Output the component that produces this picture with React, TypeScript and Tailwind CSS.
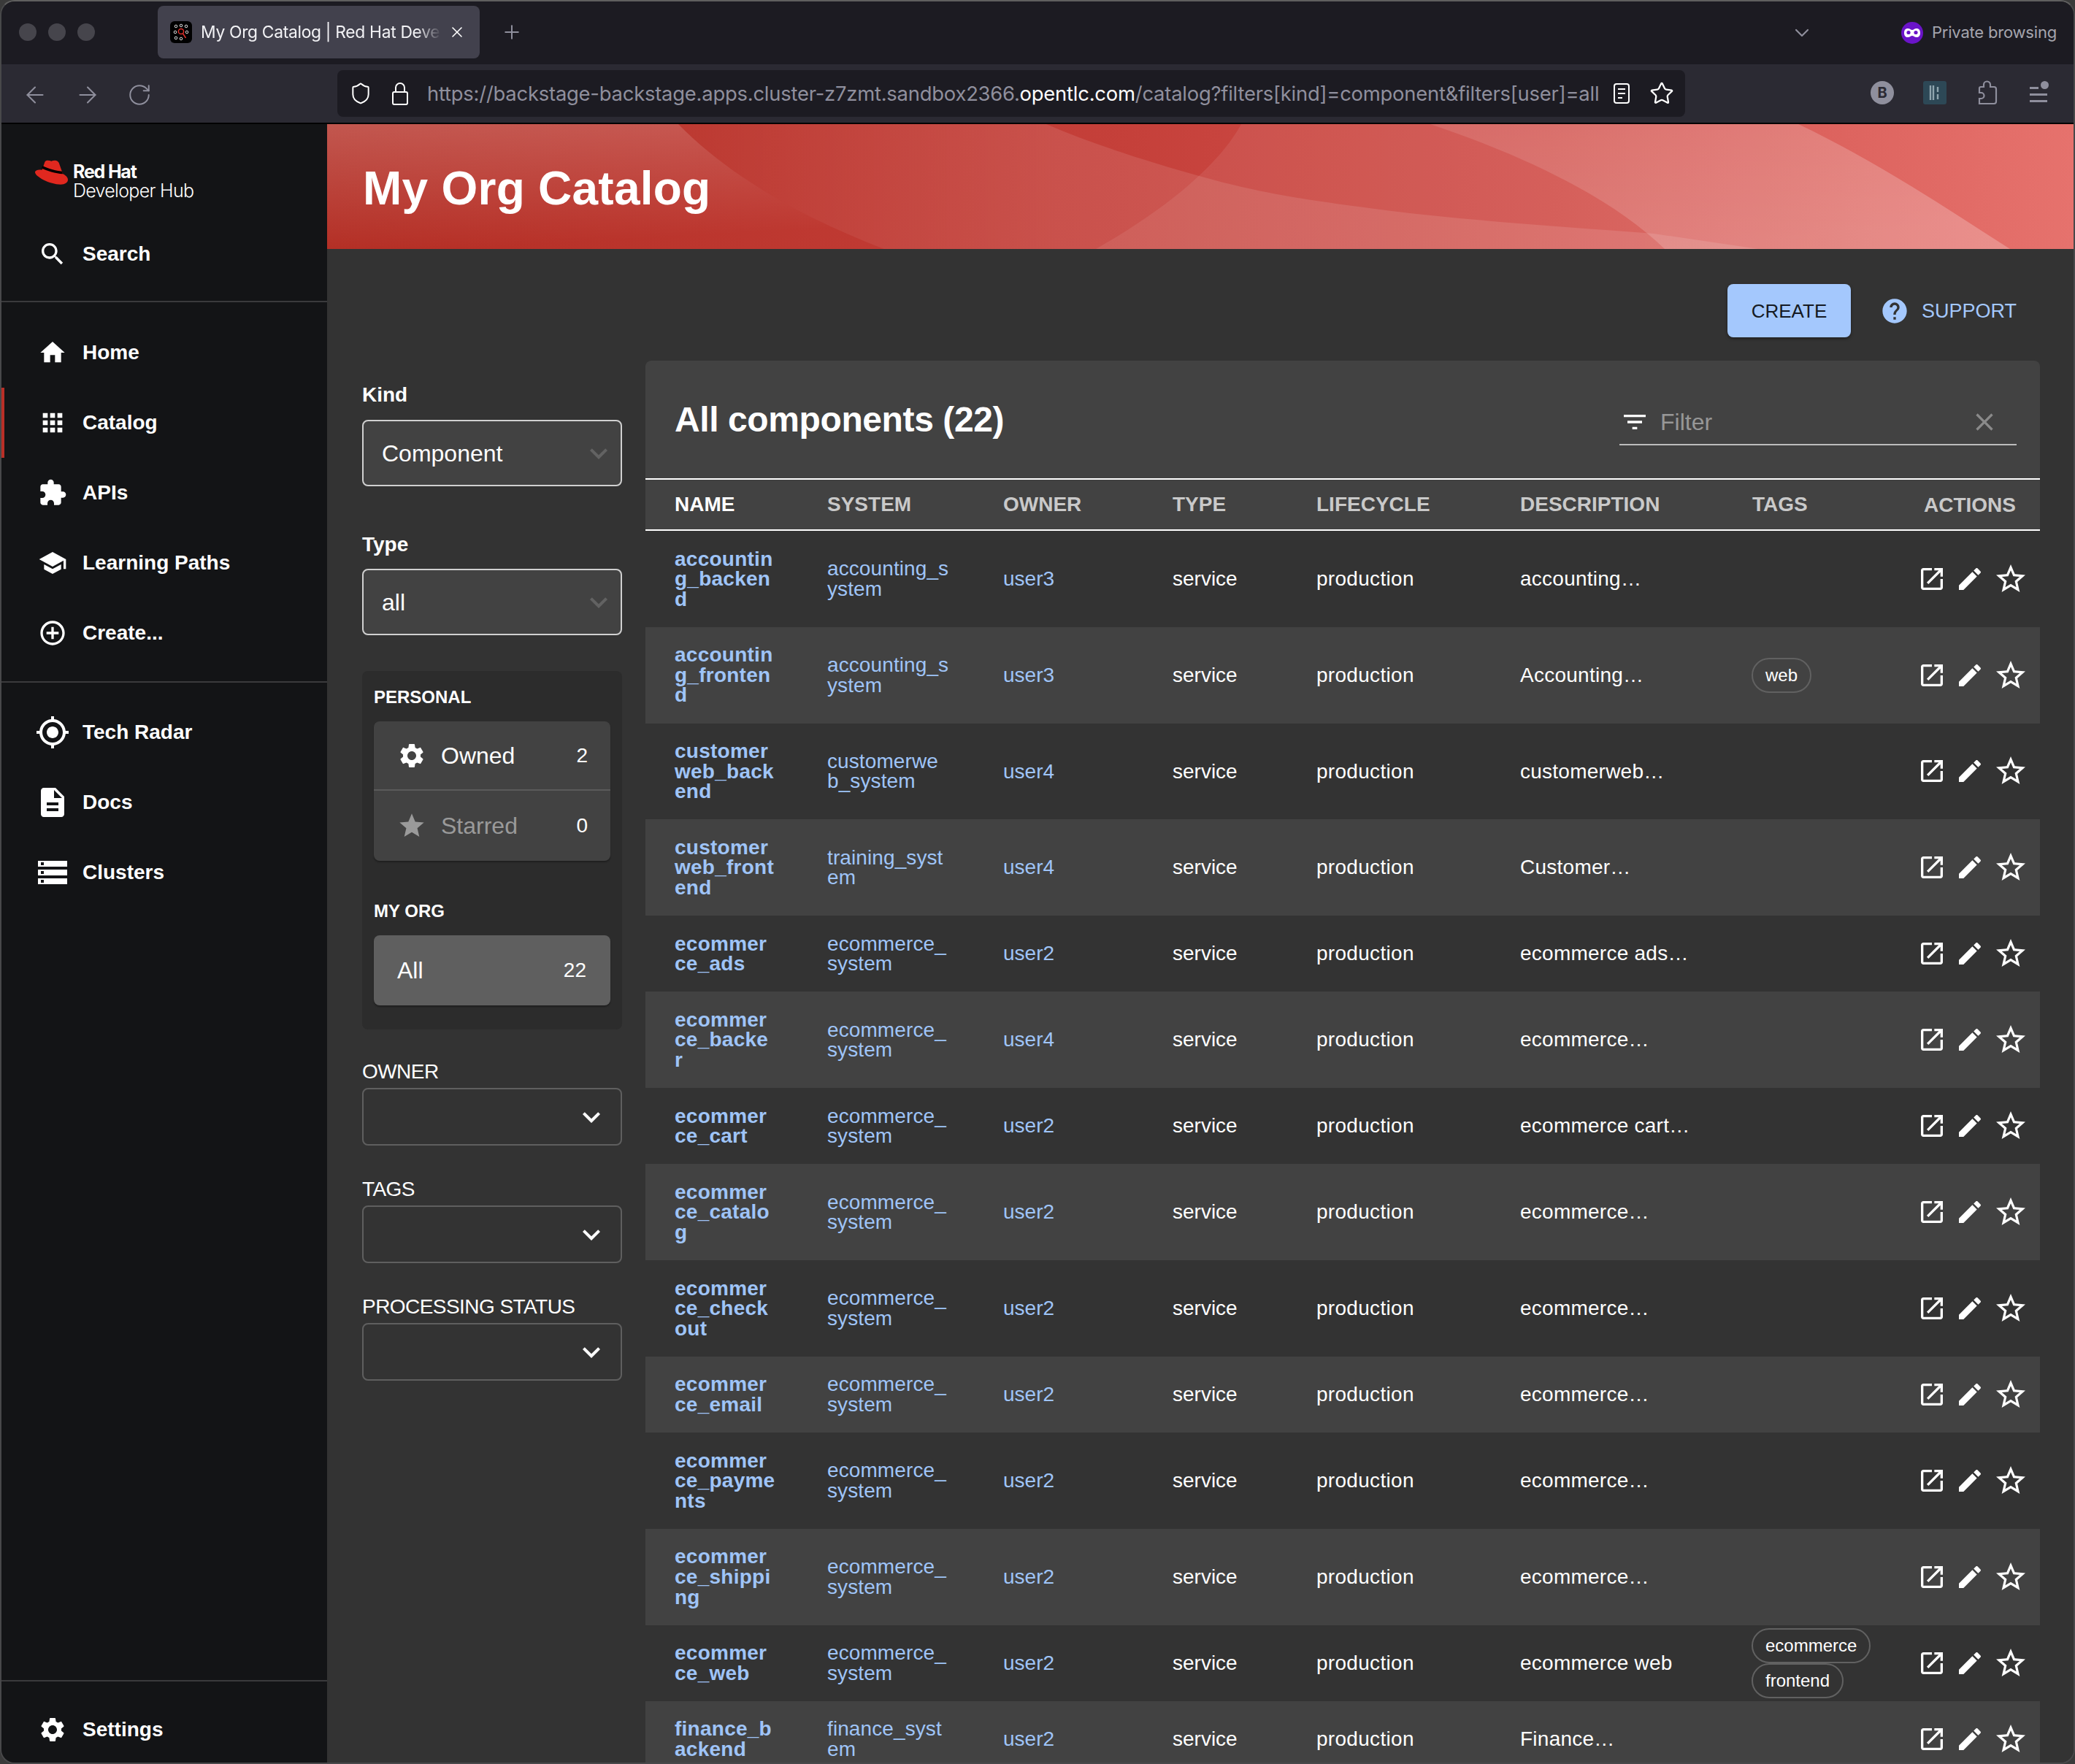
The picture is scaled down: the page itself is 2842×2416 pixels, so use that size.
import { ArrowLeft, ArrowRight, ChevronDown, Plus, RotateCw, Shield, Star, X } from 'lucide-react'

const paths = {
  home: 'M10 20v-6h4v6h5v-8h3L12 3 2 12h3v8z',
  apps: 'M4 8h4V4H4v4zm6 12h4v-4h-4v4zm-6 0h4v-4H4v4zm0-6h4v-4H4v4zm6 0h4v-4h-4v4zm6-10v4h4V4h-4zm-6 4h4V4h-4v4zm6 6h4v-4h-4v4zm0 6h4v-4h-4v4z',
  extension:
    'M20.5 11H19V7c0-1.1-.9-2-2-2h-4V3.5C13 2.12 11.88 1 10.5 1S8 2.12 8 3.5V5H4c-1.1 0-1.99.9-1.99 2v3.8H3.5c1.49 0 2.7 1.21 2.7 2.7s-1.21 2.7-2.7 2.7H2V20c0 1.1.9 2 2 2h3.8v-1.5c0-1.49 1.21-2.7 2.7-2.7 1.49 0 2.7 1.21 2.7 2.7V22H17c1.1 0 2-.9 2-2v-4h1.5c1.38 0 2.5-1.12 2.5-2.5S21.88 11 20.5 11z',
  school: 'M5 13.18v4L12 21l7-3.82v-4L12 17l-7-3.82zM12 3L1 9l11 6 9-4.91V17h2V9L12 3z',
  addCircle:
    'M13 7h-2v4H7v2h4v4h2v-4h4v-2h-4V7zm-1-5C6.48 2 2 6.48 2 12s4.48 10 10 10 10-4.48 10-10S17.52 2 12 2zm0 18c-4.41 0-8-3.59-8-8s3.59-8 8-8 8 3.59 8 8-3.59 8-8 8z',
  gps: 'M12 8c-2.21 0-4 1.79-4 4s1.79 4 4 4 4-1.79 4-4-1.79-4-4-4zm8.94 3c-.46-4.17-3.77-7.48-7.94-7.94V1h-2v2.06C6.83 3.52 3.52 6.83 3.06 11H1v2h2.06c.46 4.17 3.77 7.48 7.94 7.94V23h2v-2.06c4.17-.46 7.48-3.77 7.94-7.94H23v-2h-2.06zM12 19c-3.87 0-7-3.13-7-7s3.13-7 7-7 7 3.13 7 7-3.13 7-7 7z',
  description:
    'M14 2H6c-1.1 0-1.99.9-1.99 2L4 20c0 1.1.89 2 1.99 2H18c1.1 0 2-.9 2-2V8l-6-6zm2 16H8v-2h8v2zm0-4H8v-2h8v2zm-3-5V3.5L18.5 9H13z',
  storage: 'M2 20h20v-4H2v4zm2-3h2v2H4v-2zM2 4v4h20V4H2zm4 3H4V5h2v2zm-4 7h20v-4H2v4zm2-3h2v2H4v-2z',
  settings:
    'M19.14 12.94c.04-.3.06-.61.06-.94 0-.32-.02-.64-.07-.94l2.03-1.58c.18-.14.23-.41.12-.61l-1.92-3.32c-.12-.22-.37-.29-.59-.22l-2.39.96c-.5-.38-1.03-.7-1.62-.94l-.36-2.54c-.04-.24-.24-.41-.48-.41h-3.84c-.24 0-.43.17-.47.41l-.36 2.54c-.59.24-1.13.57-1.62.94l-2.39-.96c-.22-.08-.47 0-.59.22L2.74 8.87c-.12.21-.08.47.12.61l2.03 1.58c-.05.3-.09.63-.09.94s.02.64.07.94l-2.03 1.58c-.18.14-.23.41-.12.61l1.92 3.32c.12.22.37.29.59.22l2.39-.96c.5.38 1.03.7 1.62.94l.36 2.54c.05.24.24.41.48.41h3.84c.24 0 .44-.17.47-.41l.36-2.54c.59-.24 1.13-.56 1.62-.94l2.39.96c.22.08.47 0 .59-.22l1.92-3.32c.12-.22.07-.47-.12-.61l-2.01-1.58zM12 15.6c-1.98 0-3.6-1.62-3.6-3.6s1.62-3.6 3.6-3.6 3.6 1.62 3.6 3.6-1.62 3.6-3.6 3.6z',
  search:
    'M15.5 14h-.79l-.28-.27C15.41 12.59 16 11.11 16 9.5 16 5.91 13.09 3 9.5 3S3 5.91 3 9.5 5.91 16 9.5 16c1.61 0 3.09-.59 4.23-1.57l.27.28v.79l5 4.99L20.49 19l-4.99-5zm-6 0C7.01 14 5 11.99 5 9.5S7.01 5 9.5 5 14 7.01 14 9.5 11.99 14 9.5 14z',
  openInNew:
    'M19 19H5V5h7V3H5c-1.11 0-2 .9-2 2v14c0 1.1.89 2 2 2h14c1.1 0 2-.9 2-2v-7h-2v7zM14 3v2h3.59l-9.83 9.83 1.41 1.41L19 6.41V10h2V3h-7z',
  edit: 'M3 17.25V21h3.75L17.81 9.94l-3.75-3.75L3 17.25zM20.71 7.04c.39-.39.39-1.02 0-1.41l-2.34-2.34c-.39-.39-1.02-.39-1.41 0l-1.83 1.83 3.75 3.75 1.83-1.83z',
  starBorder:
    'M22 9.24l-7.19-.62L12 2 9.19 8.63 2 9.24l5.46 4.73L5.82 21 12 17.27 18.18 21l-1.63-7.03L22 9.24zM12 15.4l-3.76 2.27 1-4.28-3.32-2.88 4.38-.38L12 6.1l1.71 4.04 4.38.38-3.32 2.88 1 4.28L12 15.4z',
  star: 'M12 17.27L18.18 21l-1.64-7.03L22 9.24l-7.19-.61L12 2 9.19 8.63 2 9.24l5.46 4.73L5.82 21z',
  filter: 'M10 18h4v-2h-4v2zM3 6v2h18V6H3zm3 7h12v-2H6v2z',
  clear: 'M19 6.41L17.59 5 12 10.59 6.41 5 5 6.41 10.59 12 5 17.59 6.41 19 12 13.41 17.59 19 19 17.59 13.41 12z',
  help: 'M12 2C6.48 2 2 6.48 2 12s4.48 10 10 10 10-4.48 10-10S17.52 2 12 2zm1 17h-2v-2h2v2zm2.07-7.75l-.9.92C13.45 12.9 13 13.5 13 15h-2v-.5c0-1.1.45-2.1 1.17-2.83l1.24-1.26c.37-.36.59-.86.59-1.41 0-1.1-.9-2-2-2s-2 .9-2 2H8c0-2.21 1.79-4 4-4s4 1.79 4 4c0 .88-.36 1.68-.93 2.25z',
  expand: 'M16.59 8.59L12 13.17 7.41 8.59 6 10l6 6 6-6z',
}

function Mui({ d, size = 40, className = 'text-white' }: { d: string; size?: number; className?: string }) {
  return (
    <svg viewBox="0 0 24 24" width={size} height={size} fill="currentColor" className={`shrink-0 ${className}`}>
      <path d={d} />
    </svg>
  )
}

function TabFavicon() {
  return (
    <svg viewBox="0 0 30 30" width={30} height={30} className="shrink-0">
      <rect width="30" height="30" rx="6" fill="#000" />
      {[
        [8, 7],
        [15, 6],
        [22, 7],
        [7, 15],
        [23, 15],
        [8, 23],
        [15, 24],
      ].map(([cx, cy]) => (
        <circle key={`${cx}-${cy}`} cx={cx} cy={cy} r="1.8" fill="none" stroke="#ddd" strokeWidth="1" />
      ))}
      <circle cx="15" cy="14" r="3.6" fill="none" stroke="#e0302a" strokeWidth="1.5" />
      <path d="M17.5 17l4 6" stroke="#e0302a" strokeWidth="1.5" />
    </svg>
  )
}

function BrowserChrome() {
  return (
    <div className="shrink-0 font-['Inter',sans-serif]">
      <div className="flex h-[86px] items-start bg-[#1c1b22]">
        <div className="ml-[24px] mt-[30px] flex w-[190px] gap-[16px]">
          <span className="size-[24px] rounded-full bg-[#46454c]" />
          <span className="size-[24px] rounded-full bg-[#46454c]" />
          <span className="size-[24px] rounded-full bg-[#46454c]" />
        </div>
        <div className="mt-[6px] flex h-[72px] w-[441px] items-center rounded-[8px] bg-[#42414d] pl-[17px]">
          <TabFavicon />
          <div className="ml-[12px] w-[329px] whitespace-nowrap text-[22.8px] tracking-[-0.3px] text-[#f2f2f5] [mask-image:linear-gradient(90deg,#000_90%,transparent)]">
            My Org Catalog | Red Hat Develo
          </div>
          <X size={24} strokeWidth={1.6} className="ml-[10px] text-white" />
        </div>
        <Plus size={30} strokeWidth={1.6} className="ml-[29px] mt-[27px] text-[#8f8f9d]" />
        <div className="ml-auto mt-[26px] flex items-center pr-[23px]">
          <ChevronDown size={32} strokeWidth={1.6} className="mr-[120px] text-[#8f8f9d]" />
          <svg viewBox="0 0 30 30" width={30} height={30} className="mr-[12px]">
            <circle cx="15" cy="15" r="15" fill="#6a14c8" />
            <path d="M4 15c0-4 2-6 5-6 3 0 4 2 6 2s3-2 6-2c3 0 5 2 5 6s-2 6-5 6c-3 0-4-2-6-2s-3 2-6 2c-3 0-5-2-5-6z" fill="#fff" />
            <circle cx="10" cy="14.5" r="2.6" fill="#6a14c8" />
            <circle cx="20" cy="14.5" r="2.6" fill="#6a14c8" />
          </svg>
          <span className="whitespace-nowrap text-[22px] tracking-[-0.2px] text-[#a5a5ae]">Private browsing</span>
        </div>
      </div>
      <div className="flex h-[82px] items-start border-b-2 border-black bg-[#2b2a33]">
        <div className="mt-[24px] flex w-[460px] items-center gap-[36px] pl-[28px] text-[#8f8f9d]">
          <ArrowLeft size={36} strokeWidth={1.4} />
          <ArrowRight size={36} strokeWidth={1.4} />
          <RotateCw size={34} strokeWidth={1.4} />
        </div>
        <div className="mt-[8px] flex h-[64px] w-[1846px] items-center rounded-[8px] bg-[#1c1b22] pl-[16px]">
          <Shield size={32} strokeWidth={1.5} className="text-white" />
          <svg viewBox="0 0 22 32" width={22} height={32} fill="none" stroke="#fff" strokeWidth="2" className="ml-[27px]">
            <rect x="1" y="14" width="20" height="17" rx="2" />
            <path d="M5 14V8a6 6 0 0 1 12 0v6" />
          </svg>
          <div className="ml-[26px] whitespace-nowrap pt-[2px] text-[27.4px] tracking-[-0.22px] text-[#8f8f9d]">
            https://backstage-backstage.apps.cluster-z7zmt.sandbox2366.<span className="text-white">opentlc.com</span>
            /catalog?filters[kind]=component&amp;filters[user]=all
          </div>
          <svg viewBox="0 0 22 28" width={22} height={28} fill="none" stroke="#fff" strokeWidth="2" className="ml-auto">
            <rect x="1" y="1" width="20" height="26" rx="3" />
            <path d="M6 8h10M6 14h10M6 20h6" />
          </svg>
          <Star size={34} strokeWidth={1.6} className="ml-[27px] mr-[15px] text-white" />
        </div>
        <div className="mt-[22px] flex flex-1 items-center gap-[40px] pl-[254px]">
          <span className="flex size-[32px] items-center justify-center rounded-full bg-[#8f8f9d] text-[20px] font-bold text-[#2b2a33]">B</span>
          <svg viewBox="0 0 32 32" width={32} height={32}>
            <rect width="32" height="32" rx="3" fill="#2d4856" />
            <path d="M10 6v20M14 6v20M20 8v7M20 18v7" stroke="#8fa5ae" strokeWidth="2.4" fill="none" />
          </svg>
          <svg viewBox="0 0 30 34" width={30} height={34} fill="none" stroke="#8f8f9d" strokeWidth="2.2" className="ml-[1px]">
            <path d="M4 32h20a3 3 0 0 0 3-3V12a3 3 0 0 0-3-3h-5V6a4.500 4.500 0 0 0-9 0v3H6a2 2 0 0 0-2 2v6h2.500a4 4 0 0 1 0 8H4z" />
          </svg>
          <div className="ml-[3px] flex flex-col items-start gap-[6px] pt-[4px]">
            <div className="flex w-[26px] items-center justify-between">
              <span className="h-[3px] w-[12px] bg-[#8f8f9d]" />
              <span className="-mt-[8px] size-[11px] rounded-full bg-[#8f8f9d]" />
            </div>
            <span className="h-[3px] w-[24px] bg-[#8f8f9d]" />
            <span className="h-[3px] w-[24px] bg-[#8f8f9d]" />
          </div>
        </div>
      </div>
    </div>
  )
}

function RedHatLogo() {
  return (
    <div className="flex items-start">
      <svg viewBox="55 55 135 103" width={45} height={35} className="-mt-[3px] ml-[46px] shrink-0">
        <path d="M84 98 95 66c3-9 18-7 27-4 10-4 28-6 33 12l14 40c10 5 21 14 21 24 0 12-11 20-30 20-45 0-105-33-105-50 0-8 12-12 29-10z" fill="#e0281f" />
        <path d="M82 91c20 12 58 22 87 24l-3-11c-25-2-58-11-80-22z" fill="#000" />
      </svg>
      <div className="ml-[7px] mt-[2px] flex flex-col font-['Inter',sans-serif] text-white">
        <span className="text-[25px] font-bold leading-[25px] tracking-[-1.2px]">Red Hat</span>
        <span className="text-[25px] font-light leading-[26px] tracking-[-0.7px]">Developer Hub</span>
      </div>
    </div>
  )
}

function NavItem({ icon, size = 40, label, active }: { icon: string; size?: number; label: string; active?: boolean }) {
  return (
    <div className={`flex h-[96px] items-center border-l-[4px] pl-[42px] ${active ? 'border-[#b92f27]' : 'border-transparent'}`}>
      <div className="flex w-[48px] justify-center">
        <Mui d={icon} size={size} />
      </div>
      <span className="ml-[17px] text-[28px] font-bold text-white">{label}</span>
    </div>
  )
}

function Sidebar() {
  return (
    <aside className="flex w-[446px] shrink-0 flex-col bg-[#131416]">
      <div className="border-b-2 border-[#3a3a3c] pb-[16px]">
        <div className="h-[130px] pt-[51px]">
          <RedHatLogo />
        </div>
        <NavItem icon={paths.search} label="Search" />
      </div>
      <div className="border-b-2 border-[#3a3a3c] pb-[18px] pt-[21px]">
        <NavItem icon={paths.home} label="Home" />
        <NavItem icon={paths.apps} label="Catalog" active />
        <NavItem icon={paths.extension} label="APIs" />
        <NavItem icon={paths.school} label="Learning Paths" />
        <NavItem icon={paths.addCircle} label="Create..." />
      </div>
      <div className="pt-[20px]">
        <NavItem icon={paths.gps} size={48} label="Tech Radar" />
        <NavItem icon={paths.description} size={48} label="Docs" />
        <NavItem icon={paths.storage} size={48} label="Clusters" />
      </div>
      <div className="-mb-[3px] mt-auto border-t-2 border-[#3a3a3c] pt-[18px]">
        <NavItem icon={paths.settings} label="Settings" />
      </div>
    </aside>
  )
}

function PageHeader() {
  return (
    <header className="relative h-[171px] shrink-0 overflow-hidden bg-[linear-gradient(90deg,#b32d23_0%,#c5403a_46%,#d2524d_70%,#e6726d_100%)]">
      <svg viewBox="0 0 2394 171" width={2394} height={171} className="absolute inset-0">
        <defs>
          <linearGradient id="leftWave" x1="0" y1="0" x2="0.25" y2="1">
            <stop offset="0" stopColor="#fff" stopOpacity="0.2" />
            <stop offset="1" stopColor="#fff" stopOpacity="0" />
          </linearGradient>
          <linearGradient id="underWave" x1="0" y1="0" x2="1" y2="0">
            <stop offset="0" stopColor="#fff" stopOpacity="0.02" />
            <stop offset="0.35" stopColor="#fff" stopOpacity="0.1" />
            <stop offset="1" stopColor="#fff" stopOpacity="0.12" />
          </linearGradient>
          <linearGradient id="band" x1="0" y1="0" x2="0.4" y2="1">
            <stop offset="0" stopColor="#fff" stopOpacity="0.1" />
            <stop offset="1" stopColor="#fff" stopOpacity="0.17" />
          </linearGradient>
        </defs>
        <path d="M0 0H481C540 60 630 120 763 171H0Z" fill="url(#leftWave)" />
        <path d="M481 0H985C1050 28 1120 50 1198 72S1340 104 1450 118S1690 140 1817 150L1960 171H763C630 120 540 60 481 0Z" fill="url(#underWave)" />
        <path d="M1252 0C1225 50 1160 110 1053 171H2305C2210 110 2120 50 2015 0Z" fill="#fff" fillOpacity="0.08" />
        <path d="M1511 0C1660 50 1770 110 1832 171H2305C2210 110 2120 50 2015 0Z" fill="url(#band)" />
      </svg>
      <div className="relative flex h-full items-center pl-[49px] pt-[4px]">
        <h1 className="text-[64px] font-bold leading-none tracking-[0.25px] text-white">My Org Catalog</h1>
      </div>
    </header>
  )
}

function SelectBox({ value }: { value: string }) {
  return (
    <div className="flex h-[91px] items-center justify-between rounded-[8px] border-2 border-[#d0d0d0] bg-[#424242] pl-[25px] pr-[6px]">
      <span className="text-[32px] text-white">{value}</span>
      <Mui d={paths.expand} size={48} className="text-[#626262]" />
    </div>
  )
}

function Dropdown({ label }: { label: string }) {
  return (
    <div>
      <div className="text-[28px] leading-[32px] tracking-[-0.55px] text-white">{label}</div>
      <div className="mt-[6px] flex h-[79px] items-center justify-end rounded-[8px] border-2 border-[#5f5f5f] pr-[16px]">
        <Mui d={paths.expand} size={48} />
      </div>
    </div>
  )
}

function FilterColumn() {
  return (
    <div className="w-[356px] shrink-0 pt-[32px]">
      <div className="text-[28px] font-bold leading-[30px] text-white">Kind</div>
      <div className="mt-[19px]">
        <SelectBox value="Component" />
      </div>
      <div className="mt-[65px] text-[28px] font-bold leading-[30px] text-white">Type</div>
      <div className="mt-[18px]">
        <SelectBox value="all" />
      </div>
      <div className="mt-[49px] h-[491px] rounded-[8px] bg-[#2c2c2c] px-[16px] pt-[22px]">
        <div className="text-[24px] font-bold leading-[28px] text-white">PERSONAL</div>
        <div className="mt-[19px] rounded-[8px] bg-[#424242] shadow-[0_2px_2px_rgba(0,0,0,0.3)]">
          <div className="flex h-[95px] items-center border-b-2 border-[#5a5a5a] pl-[32px] pr-[31px]">
            <Mui d={paths.settings} size={40} />
            <span className="ml-[20px] text-[32px] text-white">Owned</span>
            <span className="ml-auto text-[28px] text-white">2</span>
          </div>
          <div className="flex h-[96px] items-center pl-[32px] pr-[31px]">
            <Mui d={paths.star} size={40} className="text-[#9a9a9a]" />
            <span className="ml-[20px] text-[32px] text-[#9a9a9a]">Starred</span>
            <span className="ml-auto text-[28px] text-white">0</span>
          </div>
        </div>
        <div className="mt-[55px] text-[24px] font-bold leading-[28px] text-white">MY ORG</div>
        <div className="mt-[19px] flex h-[96px] items-center rounded-[8px] bg-[#5f5f5f] pl-[32px] pr-[33px] shadow-[0_2px_2px_rgba(0,0,0,0.3)]">
          <span className="text-[32px] text-white">All</span>
          <span className="ml-auto text-[28px] text-white">22</span>
        </div>
      </div>
      <div className="mt-[42px] flex flex-col gap-[44px]">
        <Dropdown label="OWNER" />
        <Dropdown label="TAGS" />
        <Dropdown label="PROCESSING STATUS" />
      </div>
    </div>
  )
}

const components = [
  { name: 'accountin\ng_backen\nd', system: 'accounting_s\nystem', owner: 'user3', description: 'accounting…' },
  { name: 'accountin\ng_fronten\nd', system: 'accounting_s\nystem', owner: 'user3', description: 'Accounting…', tags: ['web'] },
  { name: 'customer\nweb_back\nend', system: 'customerwe\nb_system', owner: 'user4', description: 'customerweb…' },
  { name: 'customer\nweb_front\nend', system: 'training_syst\nem', owner: 'user4', description: 'Customer…' },
  { name: 'ecommer\nce_ads', system: 'ecommerce_\nsystem', owner: 'user2', description: 'ecommerce ads…' },
  { name: 'ecommer\nce_backe\nr', system: 'ecommerce_\nsystem', owner: 'user4', description: 'ecommerce…' },
  { name: 'ecommer\nce_cart', system: 'ecommerce_\nsystem', owner: 'user2', description: 'ecommerce cart…' },
  { name: 'ecommer\nce_catalo\ng', system: 'ecommerce_\nsystem', owner: 'user2', description: 'ecommerce…' },
  { name: 'ecommer\nce_check\nout', system: 'ecommerce_\nsystem', owner: 'user2', description: 'ecommerce…' },
  { name: 'ecommer\nce_email', system: 'ecommerce_\nsystem', owner: 'user2', description: 'ecommerce…' },
  { name: 'ecommer\nce_payme\nnts', system: 'ecommerce_\nsystem', owner: 'user2', description: 'ecommerce…' },
  { name: 'ecommer\nce_shippi\nng', system: 'ecommerce_\nsystem', owner: 'user2', description: 'ecommerce…' },
  { name: 'ecommer\nce_web', system: 'ecommerce_\nsystem', owner: 'user2', description: 'ecommerce web', tags: ['ecommerce', 'frontend'] },
  { name: 'finance_b\nackend', system: 'finance_syst\nem', owner: 'user2', description: 'Finance…' },
]

const gridCols = 'grid grid-cols-[249px_241px_232px_197px_279px_318px_220px_174px]'

function TableHead() {
  const cols = ['SYSTEM', 'OWNER', 'TYPE', 'LIFECYCLE', 'DESCRIPTION', 'TAGS']
  return (
    <div className={`${gridCols} h-[72px] items-center border-y-2 border-white text-[28px] font-bold text-[#c9c9c9]`}>
      <div className="pl-[40px] text-white">NAME</div>
      {cols.map((c) => (
        <div key={c}>{c}</div>
      ))}
      <div className="mt-[2px] pr-[33px] text-right">ACTIONS</div>
    </div>
  )
}

function TableRow({ row, even }: { row: (typeof components)[number]; even: boolean }) {
  return (
    <div className={`${gridCols} items-center text-[28px] leading-[27.6px] text-white ${even ? 'bg-[#424242]' : 'bg-[#333333]'}`}>
      <div className="whitespace-pre-line py-[24.5px] pl-[40px] font-bold tracking-[0.25px] text-[#9fc4f7]">{row.name}</div>
      <div className="whitespace-pre-line tracking-[0.1px] text-[#9fc4f7]">{row.system}</div>
      <div className="text-[#9fc4f7]">{row.owner}</div>
      <div>service</div>
      <div className="tracking-[0.3px]">production</div>
      <div className="tracking-[0.25px]">{row.description}</div>
      <div className="-ml-px flex flex-col items-start">
        {row.tags?.map((tag) => (
          <span key={tag} className="flex h-[48px] items-center rounded-full border-2 border-[#616161] px-[17px] text-[24px] leading-none">
            {tag}
          </span>
        ))}
      </div>
      <div className="flex items-center justify-end gap-[12px] pr-[16px]">
        <Mui d={paths.openInNew} />
        <Mui d={paths.edit} />
        <Mui d={paths.starBorder} size={48} />
      </div>
    </div>
  )
}

function CatalogCard() {
  return (
    <div className="min-w-0 flex-1 rounded-t-[8px] bg-[#424242]">
      <div className="flex h-[161px] items-center justify-between pl-[40px] pr-[32px]">
        <h2 className="mt-[1px] text-[48px] font-bold tracking-[-0.4px] text-white">All components (22)</h2>
        <div className="mt-[8px] flex h-[62px] w-[544px] items-center border-b-2 border-[#bdbdbd] pl-[1px] pr-[24px]">
          <Mui d={paths.filter} />
          <span className="ml-[15px] text-[32px] text-[#979797]">Filter</span>
          <Mui d={paths.clear} className="ml-auto text-[#8a8a8a]" />
        </div>
      </div>
      <TableHead />
      {components.map((row, i) => (
        <TableRow key={row.name} row={row} even={i % 2 === 1} />
      ))}
    </div>
  )
}

export default function App() {
  return (
    <div className="h-[2416px] w-[2842px] overflow-hidden bg-[#3a3a3a] font-['Liberation_Sans',Arial,sans-serif]">
      <div className="flex h-full flex-col overflow-hidden rounded-[20px] border-2 border-[#48484a] border-t-[#5f5f5f]">
        <BrowserChrome />
        <div className="flex min-h-0 flex-1">
          <Sidebar />
          <main className="flex min-w-0 flex-1 flex-col bg-[#333333]">
            <PageHeader />
            <div className="min-h-0 flex-1 overflow-hidden pl-[48px] pr-[46px]">
              <div className="flex h-[153px] items-start justify-end pt-[48px]">
                <button className="h-[73px] w-[169px] rounded-[8px] bg-[#a4c8fd] pt-[2px] text-[26px] text-[#151a22] shadow-[0_2px_4px_rgba(0,0,0,0.4)]">
                  CREATE
                </button>
                <div className="ml-[40px] flex h-[73px] items-center pr-[32px]">
                  <Mui d={paths.help} className="text-[#a4c8fd]" />
                  <span className="ml-[17px] pt-[2px] text-[27px] text-[#a4c8fd]">SUPPORT</span>
                </div>
              </div>
              <div className="flex gap-[32px]">
                <FilterColumn />
                <CatalogCard />
              </div>
            </div>
          </main>
        </div>
      </div>
    </div>
  )
}
